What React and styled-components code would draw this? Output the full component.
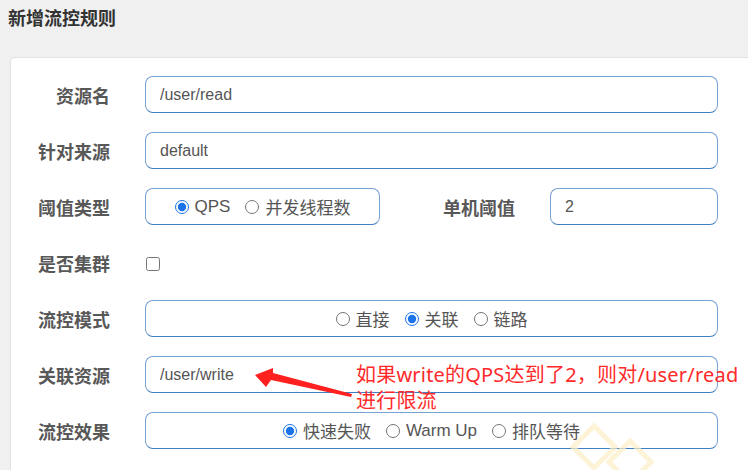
import React from 'react';
import styled, { createGlobalStyle } from 'styled-components';

const GlobalStyle = createGlobalStyle`
  body {
    margin: 0;
    background: #f0f0f0;
    font-family: "Liberation Sans", "Noto Sans CJK SC", sans-serif;
    overflow: hidden;
  }
`;

const Page = styled.div`
  padding-left: 8px;
`;

const Title = styled.h3`
  margin: 0;
  padding-top: 7px;
  height: 24px;
  line-height: 24px;
  font-size: 18px;
  font-weight: bold;
  color: #333;
`;

const Card = styled.div`
  position: relative;
  margin: 26px 0 0 2px;
  width: 770px;
  background: #fff;
  border: 1px solid #e2e2e2;
  border-radius: 4px;
  padding: 18px 0 30px 0;
  display: grid;
  row-gap: 19px;
`;

const Row = styled.div`
  position: relative;
  display: grid;
  grid-template-columns: ${(p) => p.$cols || '99px 573px'};
  column-gap: 35px;
  align-items: center;
  min-height: 37px;
`;

const Label = styled.label`
  text-align: right;
  font-size: 18px;
  font-weight: bold;
  color: #585858;
`;

const Field = styled.div`
  box-sizing: border-box;
  height: 37px;
  border: 1px solid #78a3d2;
  border-bottom-color: #3f80c2;
  border-radius: 8px;
  display: flex;
  align-items: center;
  justify-content: ${(p) => (p.$center ? 'center' : 'flex-start')};
  gap: 15px;
  padding: 0 14px;
  font-size: 16px;
  color: #555;
`;

const Option = styled.span`
  display: inline-flex;
  align-items: center;
  gap: 6px;
  font-size: 17px;
  color: #555;
`;

const Radio = styled.input.attrs({ type: 'radio', readOnly: true })`
  margin: 0;
  width: 14px;
  height: 14px;
  accent-color: #1a73e8;
`;

const Check = styled.input.attrs({ type: 'checkbox' })`
  margin: 2px 0 0 1px;
  width: 14px;
  height: 14px;
  justify-self: start;
`;

const Note = styled.div`
  position: absolute;
  left: 345px;
  top: 6px;
  font-family: "Noto Sans", "Noto Sans CJK SC", sans-serif;
  font-size: 20px;
  letter-spacing: 0.2px;
  line-height: 26px;
  color: #ff2a2a;
  white-space: nowrap;
`;

const Arrow = styled.svg`
  position: absolute;
  left: 240px;
  top: 10px;
`;

const Watermark = styled.svg`
  position: absolute;
  left: 549px;
  top: 362px;
`;

const Radios = ({ name, items, checked }) =>
  items.map((it) => (
    <Option key={it}>
      <Radio name={name} checked={it === checked} />
      {it}
    </Option>
  ));

export default function App() {
  return (
    <Page>
      <GlobalStyle />
      <Title>新增流控规则</Title>
      <Card>
        <Row>
          <Label>资源名</Label>
          <Field>/user/read</Field>
        </Row>
        <Row>
          <Label>针对来源</Label>
          <Field>default</Field>
        </Row>
        <Row $cols="99px 235px 100px 168px">
          <Label>阈值类型</Label>
          <Field $center>
            <Radios name="grade" items={['QPS', '并发线程数']} checked="QPS" />
          </Field>
          <Label>单机阈值</Label>
          <Field>2</Field>
        </Row>
        <Row>
          <Label>是否集群</Label>
          <Check />
        </Row>
        <Row>
          <Label>流控模式</Label>
          <Field $center>
            <Radios name="strategy" items={['直接', '关联', '链路']} checked="关联" />
          </Field>
        </Row>
        <Row>
          <Label>关联资源</Label>
          <Field>/user/write</Field>
          <Arrow width="110" height="35" viewBox="0 0 110 35">
            <polygon
              points="4,9 22,2 22,7 101,28 100,31 20,14 15,21"
              fill="#ff2020"
            />
          </Arrow>
          <Note>
            如果write的QPS达到了2，则对/user/read
            <br />
            进行限流
          </Note>
        </Row>
        <Row>
          <Label>流控效果</Label>
          <Field $center>
            <Radios name="behavior" items={['快速失败', 'Warm Up', '排队等待']} checked="快速失败" />
          </Field>
        </Row>
        <Watermark width="110" height="70" viewBox="0 0 110 70">
          <g fill="none" stroke="#fdefc6" strokeWidth="5" opacity="0.7">
            <polygon points="34,6 55,27 34,48 13,27" />
            <polygon points="70,21 91,42 70,63 49,42" />
          </g>
        </Watermark>
      </Card>
    </Page>
  );
}
